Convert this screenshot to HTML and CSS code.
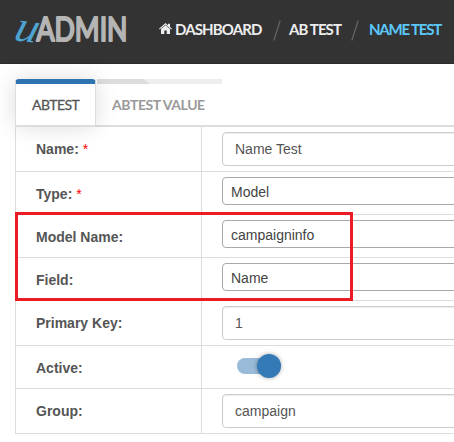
FILE: index.html
```html
<!DOCTYPE html>
<html lang="en">
<head>
<meta charset="utf-8">
<title>uAdmin - Name Test</title>
<link rel="stylesheet" href="styles.css">
</head>
<body>
<header class="topbar">
  <svg class="logo" width="130" height="62" viewBox="0 0 130 62" role="img" aria-label="uAdmin">
    <text class="logo-u" transform="translate(12.5 40) skewY(7) skewX(-16)" textLength="23" lengthAdjust="spacingAndGlyphs">u</text>
    <text class="logo-admin" transform="translate(36.5 40.7)" textLength="91" lengthAdjust="spacingAndGlyphs">ADMIN</text>
  </svg>
  <nav class="crumbs">
    <a class="crumb home"><svg class="house" width="13" height="11" viewBox="0 0 13 11"><path d="M6.5 0 9 2.2V.8h2v3.1l2 1.8-.7.9-5.8-5-5.8 5-.7-.9z"/><path d="M6.5 2.1 11 6.1V11H7.7V7.5H5.3V11H2V6.1z"/></svg><span>DASHBOARD</span></a>
    <svg class="slash" width="8" height="22" viewBox="0 0 8 22"><path d="M7.2.5.8 20.5"/></svg>
    <a class="crumb ab">AB TEST</a>
    <svg class="slash" width="8" height="22" viewBox="0 0 8 22"><path d="M7.2.5.8 20.5"/></svg>
    <a class="crumb current">NAME TEST</a>
  </nav>
</header>
<main class="panel">
  <div class="tabs">
    <div class="tab active"><span>ABTEST</span></div>
    <div class="tab other"><span>ABTEST VALUE</span></div>
  </div>
  <form class="fields">
    <div class="row first"><label>Name: <i>*</i></label><div class="cell"><div class="input">Name Test</div></div></div>
    <div class="row"><label>Type: <i>*</i></label><div class="cell"><div class="select">Model</div></div></div>
    <div class="row"><label>Model Name:</label><div class="cell"><div class="select">campaigninfo</div></div></div>
    <div class="row"><label>Field:</label><div class="cell"><div class="select">Name</div></div></div>
    <div class="row tall"><label>Primary Key:</label><div class="cell"><div class="input">1</div></div></div>
    <div class="row"><label>Active:</label><div class="cell"><div class="switch"><div class="knob"></div></div></div></div>
    <div class="row tall"><label>Group:</label><div class="cell"><div class="input">campaign</div></div></div>
  </form>
  <div class="highlight"></div>
</main>
</body>
</html>
```
FILE: styles.css
```css
* { box-sizing: border-box; }
body { margin: 0; width: 454px; height: 442px; overflow: hidden; background: #fff; color: #555; font: 14px "Liberation Sans", Arial, sans-serif; }
.topbar { height: 64px; background: #333; border-bottom: 1px solid #2b2b2b; display: flex; }
.logo { flex: none; display: block; overflow: visible; }
.logo-u { font: italic 44px "Liberation Serif", serif; fill: #4fa3d1; }
.logo-admin { font: 33.5px Lato, sans-serif; fill: #b5b5b5; stroke: #b5b5b5; stroke-width: 2.2; stroke-linejoin: round; }
.crumbs { display: flex; height: 58px; align-items: center; padding-left: 29px; flex: none; font: 700 15px Lato, sans-serif; color: #eee; white-space: nowrap; }
.crumb { display: block; }
.home { width: 114px; display: flex; align-items: center; gap: 3px; letter-spacing: -.88px; }
.house { fill: #eee; flex: none; margin-top: -1px; }
.slash { fill: none; stroke: #666; stroke-width: 1.2; flex: none; margin-top: 4px; }
.ab { width: 62px; margin-left: 8px; letter-spacing: -.9px; }
.current { margin-left: 10px; color: #5bc8fa; letter-spacing: -1.2px; }
.panel { position: relative; padding: 15px 0 0 15px; }
.tabs { display: flex; height: 48px; font: 700 14px Lato, sans-serif; }
.tab { height: 48px; padding-top: 17px; white-space: nowrap; }
.active { position: relative; z-index: 1; width: 81px; border: 1px solid #ddd; border-top: 5px solid #2f73b0; border-radius: 4px 4px 0 0; border-bottom: 2px solid #ddd; padding: 12px 0 0 16px; color: #555; background: #fff; box-shadow: 0 0 22px rgba(0,0,0,.14); letter-spacing: -.55px; font-weight: 400; -webkit-text-stroke: .3px #555; }
.other { flex: 1; border-bottom: 2px solid #ddd; padding-left: 16px; color: #999; letter-spacing: -.43px; background: linear-gradient(35deg, transparent 50%, #eee 51%) 47px 0 / 7px 5px no-repeat, linear-gradient(#ddd, #ddd) 1px 0 / 53px 5px no-repeat, linear-gradient(#eee, #eee) 53px 0 / 73px 5px no-repeat; }
.fields { border-left: 1px solid #ddd; }
.row { display: flex; height: 43px; border-bottom: 1px solid #ddd; }
.row.first, .row.tall { height: 45px; }
.row label { width: 185px; flex: none; padding: 14px 0 0 20px; font-weight: 700; line-height: 16px; }
.row label i { color: #f00; font-style: normal; font-weight: 400; }
.cell { flex: 1; border-left: 1px solid #ddd; padding: 5px 0 0 20px; overflow: hidden; }
.input { width: 300px; height: 34px; border: 1px solid #ccc; border-radius: 4px; padding: 0 12px; line-height: 33px; box-shadow: inset 0 1px 1px rgba(0,0,0,.075); }
.select { width: 300px; height: 28px; border: 1px solid #a9a9a9; border-radius: 4px; padding: 0 8px; line-height: 29px; color: #444; }
.switch { width: 44px; height: 16px; border-radius: 8px; margin: 7px 0 0 15px; background: #99bad8; padding-left: 20px; }
.knob { width: 24px; height: 24px; border-radius: 50%; background: #337ab7; transform: translateY(-4px); box-shadow: 0 0 4px rgba(0,0,0,.35); }
.highlight { position: absolute; left: 15px; top: 148px; width: 338px; height: 89px; border: 3px solid #ed1c24; z-index: 2; }
```
